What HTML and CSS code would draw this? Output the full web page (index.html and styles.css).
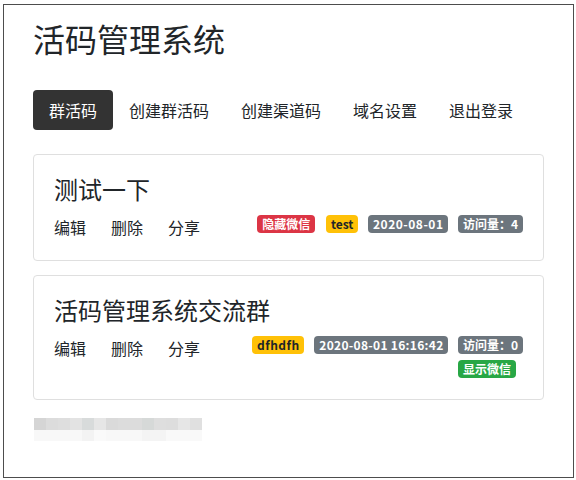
FILE: index.html
```html
<!DOCTYPE html>
<html lang="zh">
<head>
<meta charset="utf-8">
<title>活码管理系统</title>
<link rel="stylesheet" href="styles.css">
</head>
<body>
<div class="frame">
  <h1 class="site-title">活码管理系统</h1>
  <nav class="nav">
    <a class="nav-link active">群活码</a>
    <a class="nav-link">创建群活码</a>
    <a class="nav-link">创建渠道码</a>
    <a class="nav-link">域名设置</a>
    <a class="nav-link">退出登录</a>
  </nav>

  <div class="card">
    <h2 class="card-title">测试一下</h2>
    <div class="card-row">
      <div class="actions">
        <a class="action">编辑</a>
        <a class="action">删除</a>
        <a class="action">分享</a>
      </div>
      <div class="badges">
        <span class="badge red first">隐藏微信</span>
        <span class="badge yellow">test</span>
        <span class="badge grey wide">2020-08-01</span>
        <div class="badge-col">
          <span class="badge grey">访问量：4</span>
        </div>
      </div>
    </div>
  </div>

  <div class="card">
    <h2 class="card-title">活码管理系统交流群</h2>
    <div class="card-row">
      <div class="actions">
        <a class="action">编辑</a>
        <a class="action">删除</a>
        <a class="action">分享</a>
      </div>
      <div class="badges">
        <span class="badge yellow wide">dfhdfh</span>
        <span class="badge grey wide-s">2020-08-01 16:16:42</span>
        <div class="badge-col">
          <span class="badge grey">访问量：0</span>
          <span class="badge green">显示微信</span>
        </div>
      </div>
    </div>
  </div>

  <div class="footer-blur">
    <div class="blur-top"></div>
    <div class="blur-bottom"></div>
  </div>
</div>
</body>
</html>
```

FILE: styles.css
```css
* { box-sizing: border-box; }

html, body {
  margin: 0;
  padding: 0;
  background: #fff;
}

body {
  font-family: "Noto Sans CJK SC", "Noto Sans", sans-serif;
  color: #212529;
  font-size: 16px;
  line-height: 1.5;
}

.frame {
  margin: 4px 3px 0 3px;
  width: 571px;
  height: 474px;
  border: 1px solid #4d4d4d;
  padding: 14px 29px 0 29px;
}

.site-title {
  margin: 0 0 33px 0;
  font-size: 32px;
  font-weight: 400;
  line-height: 1.2;
  color: #212529;
}

.nav {
  display: flex;
  margin-bottom: 24px;
}

.nav-link {
  padding: 8px 16px;
  line-height: 24px;
  font-size: 16px;
  color: #212529;
  border-radius: 4px;
}

.nav-link.active {
  background: #333333;
  color: #fff;
}

.card {
  border: 1px solid #dfdfdf;
  border-radius: 4px;
  padding: 20px;
  margin-bottom: 14px;
}

.card-title {
  margin: 0 0 11px 0;
  font-size: 24px;
  font-weight: 400;
  line-height: 1.2;
}

.card-row {
  display: flex;
  justify-content: space-between;
  align-items: flex-start;
  margin-bottom: 1px;
}

.actions {
  display: flex;
  gap: 25px;
  line-height: 24px;
}

.action {
  color: #212529;
}

.badges {
  display: flex;
  align-items: flex-start;
  gap: 10px;
}

.badge-col {
  display: flex;
  flex-direction: column;
  align-items: flex-start;
  gap: 6px;
}

.badge {
  display: inline-block;
  font-size: 12px;
  font-weight: 700;
  line-height: 12px;
  padding: 3px 4.8px;
  border-radius: 4px;
  white-space: nowrap;
}

.badge.wide { letter-spacing: 0.5px; }
.badge.wide-s { letter-spacing: 0.3px; }

.badge.first { margin-right: 1px; }

.red { background: #dc3545; color: #fff; }
.yellow { background: #ffc107; color: #212529; }
.grey { background: #6c757d; color: #fff; }
.green { background: #28a745; color: #fff; }

.footer-blur {
  width: 168px;
  margin: 18px 0 0 1px;
}

.blur-top {
  height: 12px;
  background: linear-gradient(to right,
    #d5d5d5 0 12px, #dcdcdc 12px 24px, #dedede 24px 36px, #e3e3e3 36px 48px,
    #d8dbdb 48px 60px, #e6e6e6 60px 72px, #dadada 72px 84px, #dcdcdc 84px 96px,
    #dcdcdc 96px 108px, #d6d9d8 108px 120px, #dedede 120px 132px, #dddddd 132px 144px,
    #e6e6e6 144px 156px, #e0e0e0 156px 168px);
}

.blur-bottom {
  height: 11px;
  background: linear-gradient(to right,
    #f8f8f8 0 48px, #f3f3f3 48px 60px, #fafafa 60px 72px, #f8f8f8 72px 108px,
    #f4f4f4 108px 132px, #f9f9f9 132px 168px);
}
```
